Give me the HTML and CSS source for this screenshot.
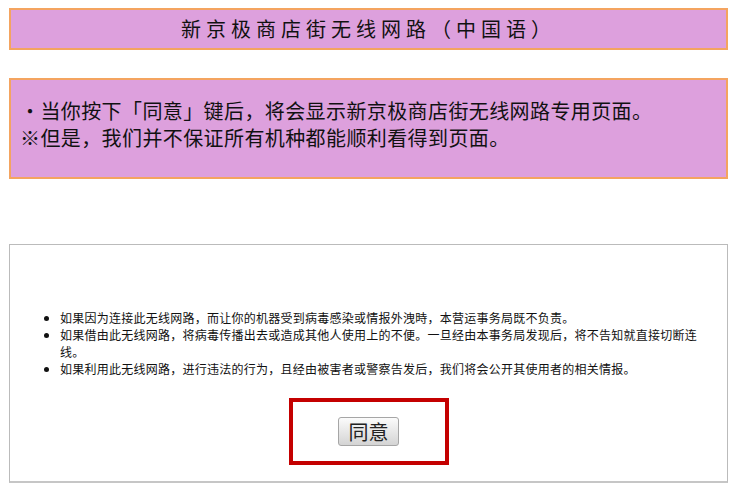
FILE: index.html
```html
<!DOCTYPE html>
<html lang="zh-CN">
<head>
  <meta charset="UTF-8">
  <meta name="viewport" content="width=device-width, initial-scale=1.0">
  <title>新京极商店街无线网路</title>
  <link rel="stylesheet" href="styles.css">
</head>
<body>
  <h1 class="title">新京极商店街无线网路（中国语）</h1>

  <div class="notice">
    <p>・当你按下「同意」键后，将会显示新京极商店街无线网路专用页面。</p>
    <p>※但是，我们并不保证所有机种都能顺利看得到页面。</p>
  </div>

  <div class="terms">
    <ul>
      <li>如果因为连接此无线网路，而让你的机器受到病毒感染或情报外洩時，本营运事务局既不负责。</li>
      <li>如果借由此无线网路，将病毒传播出去或造成其他人使用上的不便。一旦经由本事务局发现后，将不告知就直接切断连线。</li>
      <li>如果利用此无线网路，进行违法的行为，且经由被害者或警察告发后，我们将会公开其使用者的相关情报。</li>
    </ul>
    <div class="agree">
      <button class="agree-btn" type="button">同意</button>
    </div>
  </div>
</body>
</html>
```

FILE: styles.css
```css
body { margin: 0; padding: 8px 9px 12px; font-family: "Noto Sans CJK SC", "Noto Sans", sans-serif; color: #111; background: #fff; }
.title { margin: 0; height: 38px; line-height: 38px; border: 2px solid #f4a460; background: #dda0dd; text-align: center; font-size: 20px; font-weight: normal; letter-spacing: 5px; }
.notice { margin-top: 28px; height: 80px; padding: 17px 9px 0; border: 2px solid #f4a460; background: #dda0dd; font-size: 20px; line-height: 27px; letter-spacing: 0.4px; }
.notice p { margin: 0; }
.terms { margin-top: 65px; padding: 64px 0 16px; border: 1px solid #bbb; border-bottom: 2px solid #c6c6c6; }
.terms ul { margin: 0; padding: 0 27px 0 50px; font-size: 12px; line-height: 17px; letter-spacing: 0.25px; }
.agree { width: 152px; margin: 21px auto 0; padding: 15px 0; border: 4px solid #c40000; text-align: center; }
.agree-btn { display: block; margin: 0 auto; width: 61px; height: 29px; padding: 0; border: 1px solid #a6a6a6; border-radius: 3px; background: linear-gradient(#fbfbfb, #d4d4d4); font-family: "Noto Sans CJK SC", sans-serif; font-size: 20px; line-height: 27px; color: #222; }
```
